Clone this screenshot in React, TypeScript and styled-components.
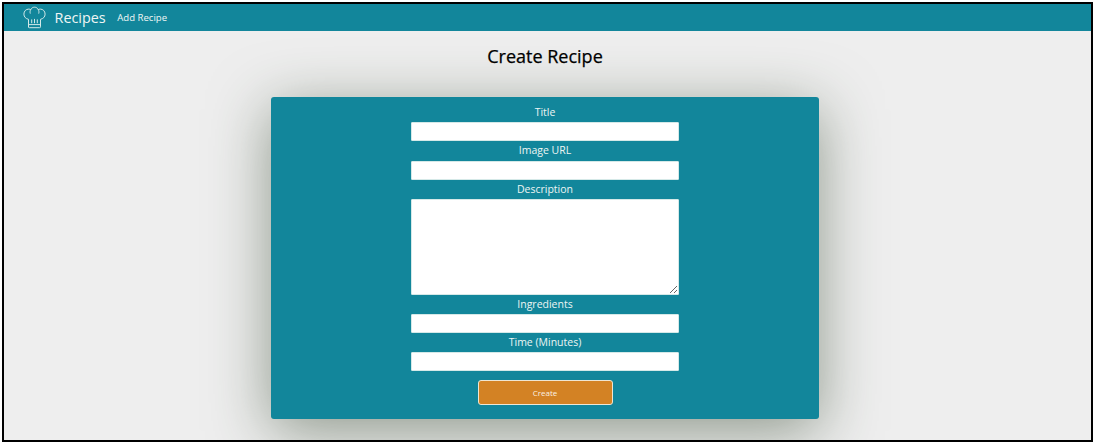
import React from "react";
import styled, { createGlobalStyle } from "styled-components";

const GlobalStyle = createGlobalStyle`
  * { box-sizing: border-box; }
  body { margin: 0; background: #fff; font-family: "Open Sans", sans-serif; overflow: hidden; }
`;

const Page = styled.div`
  width: 1091px;
  height: 440px;
  margin: 2px;
  border: 2px solid #000;
  background: #eeeeee;
  overflow: hidden;
`;

const NavBar = styled.nav`
  display: flex;
  align-items: center;
  height: 27px;
  padding-left: 19px;
  background: #12869b;
  color: #f0f6f5;
`;

const Logo = styled.svg`
  width: 23px;
  height: 23px;
  margin-right: 8.5px;
`;

const Brand = styled.span`
  font-size: 14.4px;
  line-height: 27px;
  margin-right: 11.5px;
`;

const NavLink = styled.a`
  font-size: 9.6px;
  line-height: 26px;
`;

const Main = styled.main`
  display: flex;
  flex-direction: column;
  align-items: center;
  padding-right: 5px;
`;

const Heading = styled.h1`
  margin: 11px 0 27px;
  font-size: 18px;
  line-height: 28px;
  font-weight: 500;
  color: #000;
  -webkit-text-stroke: 0.25px #000;
`;

const Card = styled.form`
  display: flex;
  flex-direction: column;
  align-items: center;
  width: 548px;
  height: 322px;
  padding-top: 6px;
  border-radius: 3px;
  background: #12869b;
  box-shadow: 0 12px 60px rgba(45, 65, 40, 0.5);
`;

const Label = styled.label`
  font-size: 10.5px;
  line-height: 19.3px;
  color: #edf5f3;
`;

const Input = styled.input`
  display: block;
  width: 268px;
  height: 19px;
  padding: 0 4px;
  border: 1px solid #d5e9e8;
  border-radius: 1px;
  background: #fff;
  outline: none;
`;

const TextArea = styled.textarea`
  display: block;
  width: 268px;
  height: 96px;
  padding: 2px;
  border: 1px solid #d5e9e8;
  border-radius: 1px;
  background: #fff;
  outline: none;
`;

const Button = styled.button`
  width: 135px;
  height: 25px;
  margin-top: 8.5px;
  padding: 0;
  border: 1.5px solid #efe6d2;
  border-radius: 3px;
  background: #d38224;
  color: #fbf1e2;
  font: 8px "Open Sans", sans-serif;
`;

const ChefHat = () => (
  <Logo viewBox="0 0 23 23" fill="none" stroke="#d3e9e8" strokeWidth="1" strokeLinejoin="round" strokeLinecap="round">
    <path d="M5.5 20.8V13.3C2.8 12.8.9 10.8.9 8.1.9 5.2 3 3.1 5.7 3.1c.8 0 1.4.2 2 .5C8.500 2 9.900 1.200 11.500 1.200s3 .8 3.800 2.400c.6-.3 1.200-.5 2-.5 2.700 0 4.800 2.100 4.800 5 0 2.700-1.900 4.700-4.600 5.200v7.500c0 .6-.3.9-.9.900H6.400c-.6 0-.9-.3-.9-.900Z" />
    <path d="M7.700 3.600C6.900 4.700 6.900 6 7.200 7.200M15.300 3.600c.8 1.100.8 2.400.5 3.600M5.500 18.600h12M8.700 13.800v3M11.500 13.300v3.500M14.300 13.800v3" />
  </Logo>
);

export default function App() {
  return (
    <>
      <GlobalStyle />
      <Page>
        <NavBar>
          <ChefHat />
          <Brand>Recipes</Brand>
          <NavLink>Add Recipe</NavLink>
        </NavBar>
        <Main>
          <Heading>Create Recipe</Heading>
          <Card>
            <Label htmlFor="title">Title</Label>
            <Input id="title" />
            <Label htmlFor="image">Image URL</Label>
            <Input id="image" />
            <Label htmlFor="description">Description</Label>
            <TextArea id="description" />
            <Label htmlFor="ingredients">Ingredients</Label>
            <Input id="ingredients" />
            <Label htmlFor="time">Time (Minutes)</Label>
            <Input id="time" />
            <Button type="button">Create</Button>
          </Card>
        </Main>
      </Page>
    </>
  );
}
